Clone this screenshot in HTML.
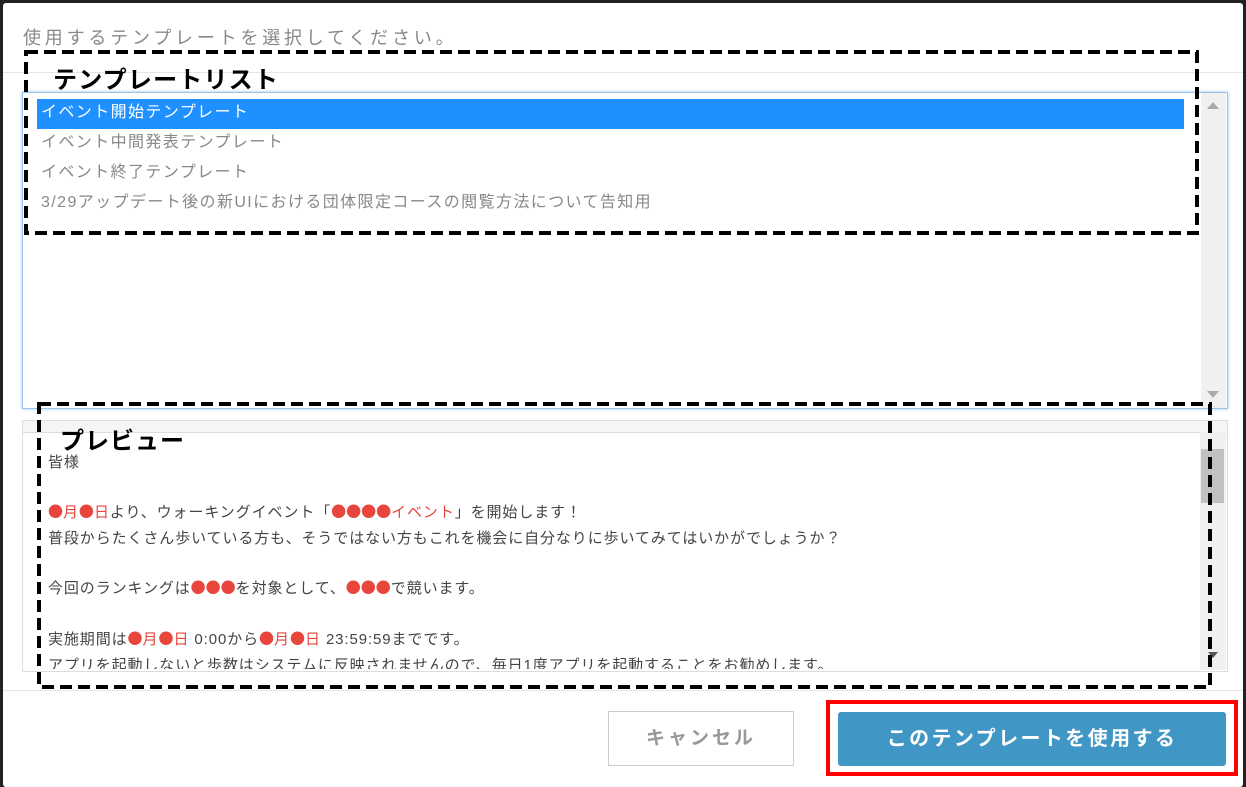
<!DOCTYPE html><html><head><meta charset="utf-8"><style>
body{margin:0;width:1246px;height:787px;background:#222;font-family:"Liberation Sans","Noto Sans CJK JP",sans-serif;overflow:hidden;position:relative}
.a{position:absolute}
.m{left:3px;top:3px;width:1240px;height:784px;background:#fff;border-radius:3px}
.row{position:absolute;left:37px;width:1147px;height:30px;line-height:28px;font-size:16px;color:#888;padding-left:4px;box-sizing:border-box;letter-spacing:1.4px;white-space:nowrap}
.p{position:absolute;left:48px;font-size:15px;color:#444;white-space:nowrap;letter-spacing:0.9px}
.r{color:#e8453c}
.b{font-family:"Noto Sans CJK JP",sans-serif;letter-spacing:0}
</style></head><body>
<div class="a m"></div>
<div class="a" style="left:23px;top:24px;font-size:18px;color:#888;letter-spacing:3.8px;white-space:nowrap">使用するテンプレートを選択してください。</div>
<div class="a" style="left:3px;top:72px;width:1240px;height:1px;background:#e5e5e5"></div>
<div class="a" style="left:22px;top:92px;width:1204px;height:315px;border:1px solid #9cc4ea;box-shadow:0 0 3px #9cc4ea"></div>
<div class="a" style="left:1201px;top:93px;width:25px;height:315px;background:#f0f0f0"></div>
<div class="a" style="left:1207px;top:102px;border:6px solid transparent;border-bottom:7px solid #aaa;border-top:0"></div>
<div class="a" style="left:1207px;top:391px;border:6px solid transparent;border-top:7px solid #aaa;border-bottom:0"></div>
<div class="row" style="top:99px;background:#1e90ff;color:#fff">イベント開始テンプレート</div>
<div class="row" style="top:129px">イベント中間発表テンプレート</div>
<div class="row" style="top:159px">イベント終了テンプレート</div>
<div class="row" style="top:189px">3/29アップデート後の新UIにおける団体限定コースの閲覧方法について告知用</div>
<div class="a" style="left:22px;top:420px;width:1204px;height:250px;border:1px solid #ddd;overflow:hidden">
<div class="a" style="left:0;top:0;width:1204px;height:11px;background:#f5f5f5;border-bottom:1px solid #ddd"></div>
</div>
<div class="a" style="left:1200px;top:432px;width:26px;height:238px;background:#f0f0f0"></div>
<div class="a" style="left:1201px;top:449px;width:23px;height:54px;background:#c1c1c1"></div>
<div class="a" style="left:1208px;top:652px;border:5px solid transparent;border-top:6px solid #555;border-bottom:0"></div>
<div class="a" style="left:23px;top:432px;width:1176px;height:237px;overflow:hidden">
<div class="p" style="left:25px;top:19px">皆様</div>
<div class="p" style="left:25px;top:69px"><span class="r"><span class="b">●</span>月<span class="b">●</span>日</span>より、ウォーキングイベント「<span class="r"><span class="b">●●●●</span>イベント</span>」を開始します！</div>
<div class="p" style="left:25px;top:95px">普段からたくさん歩いている方も、そうではない方もこれを機会に自分なりに歩いてみてはいかがでしょうか？</div>
<div class="p" style="left:25px;top:145px">今回のランキングは<span class="r b">●●●</span>を対象として、<span class="r b">●●●</span>で競います。</div>
<div class="p" style="left:25px;top:196px">実施期間は<span class="r"><span class="b">●</span>月<span class="b">●</span>日</span> 0:00から<span class="r"><span class="b">●</span>月<span class="b">●</span>日</span> 23:59:59までです。</div>
<div class="p" style="left:25px;top:222px">アプリを起動しないと歩数はシステムに反映されませんので、毎日1度アプリを起動することをお勧めします。</div>
</div>
<div class="a" style="left:3px;top:690px;width:1240px;height:1px;background:#e5e5e5"></div>
<div class="a" style="left:608px;top:711px;width:186px;height:55px;border:1px solid #ccc;box-sizing:border-box;text-align:center;line-height:53px;font-size:19px;font-weight:bold;color:#999;letter-spacing:3px">キャンセル</div>
<div class="a" style="left:838px;top:712px;width:388px;height:54px;background:#4096c4;border-radius:3px;text-align:center;line-height:54px;font-size:20px;font-weight:bold;color:#fff;letter-spacing:2.4px">このテンプレートを使用する</div>
<div class="a" style="left:826px;top:700px;width:412px;height:76px;border:4px solid #f00;box-sizing:border-box"></div>
<svg class="a" style="left:0;top:0" width="1246" height="787">
<rect x="26" y="52" width="1171" height="181" fill="none" stroke="#000" stroke-width="4" stroke-dasharray="12 6"/>
<rect x="39" y="404" width="1171" height="283" fill="none" stroke="#000" stroke-width="4" stroke-dasharray="12 6"/>
</svg>
<div class="a" style="left:53px;top:60px;font-size:24px;font-weight:bold;color:#000;letter-spacing:1.2px;white-space:nowrap">テンプレートリスト</div>
<div class="a" style="left:60px;top:421px;font-size:24px;font-weight:bold;color:#000;letter-spacing:1px">プレビュー</div>
</body></html>
